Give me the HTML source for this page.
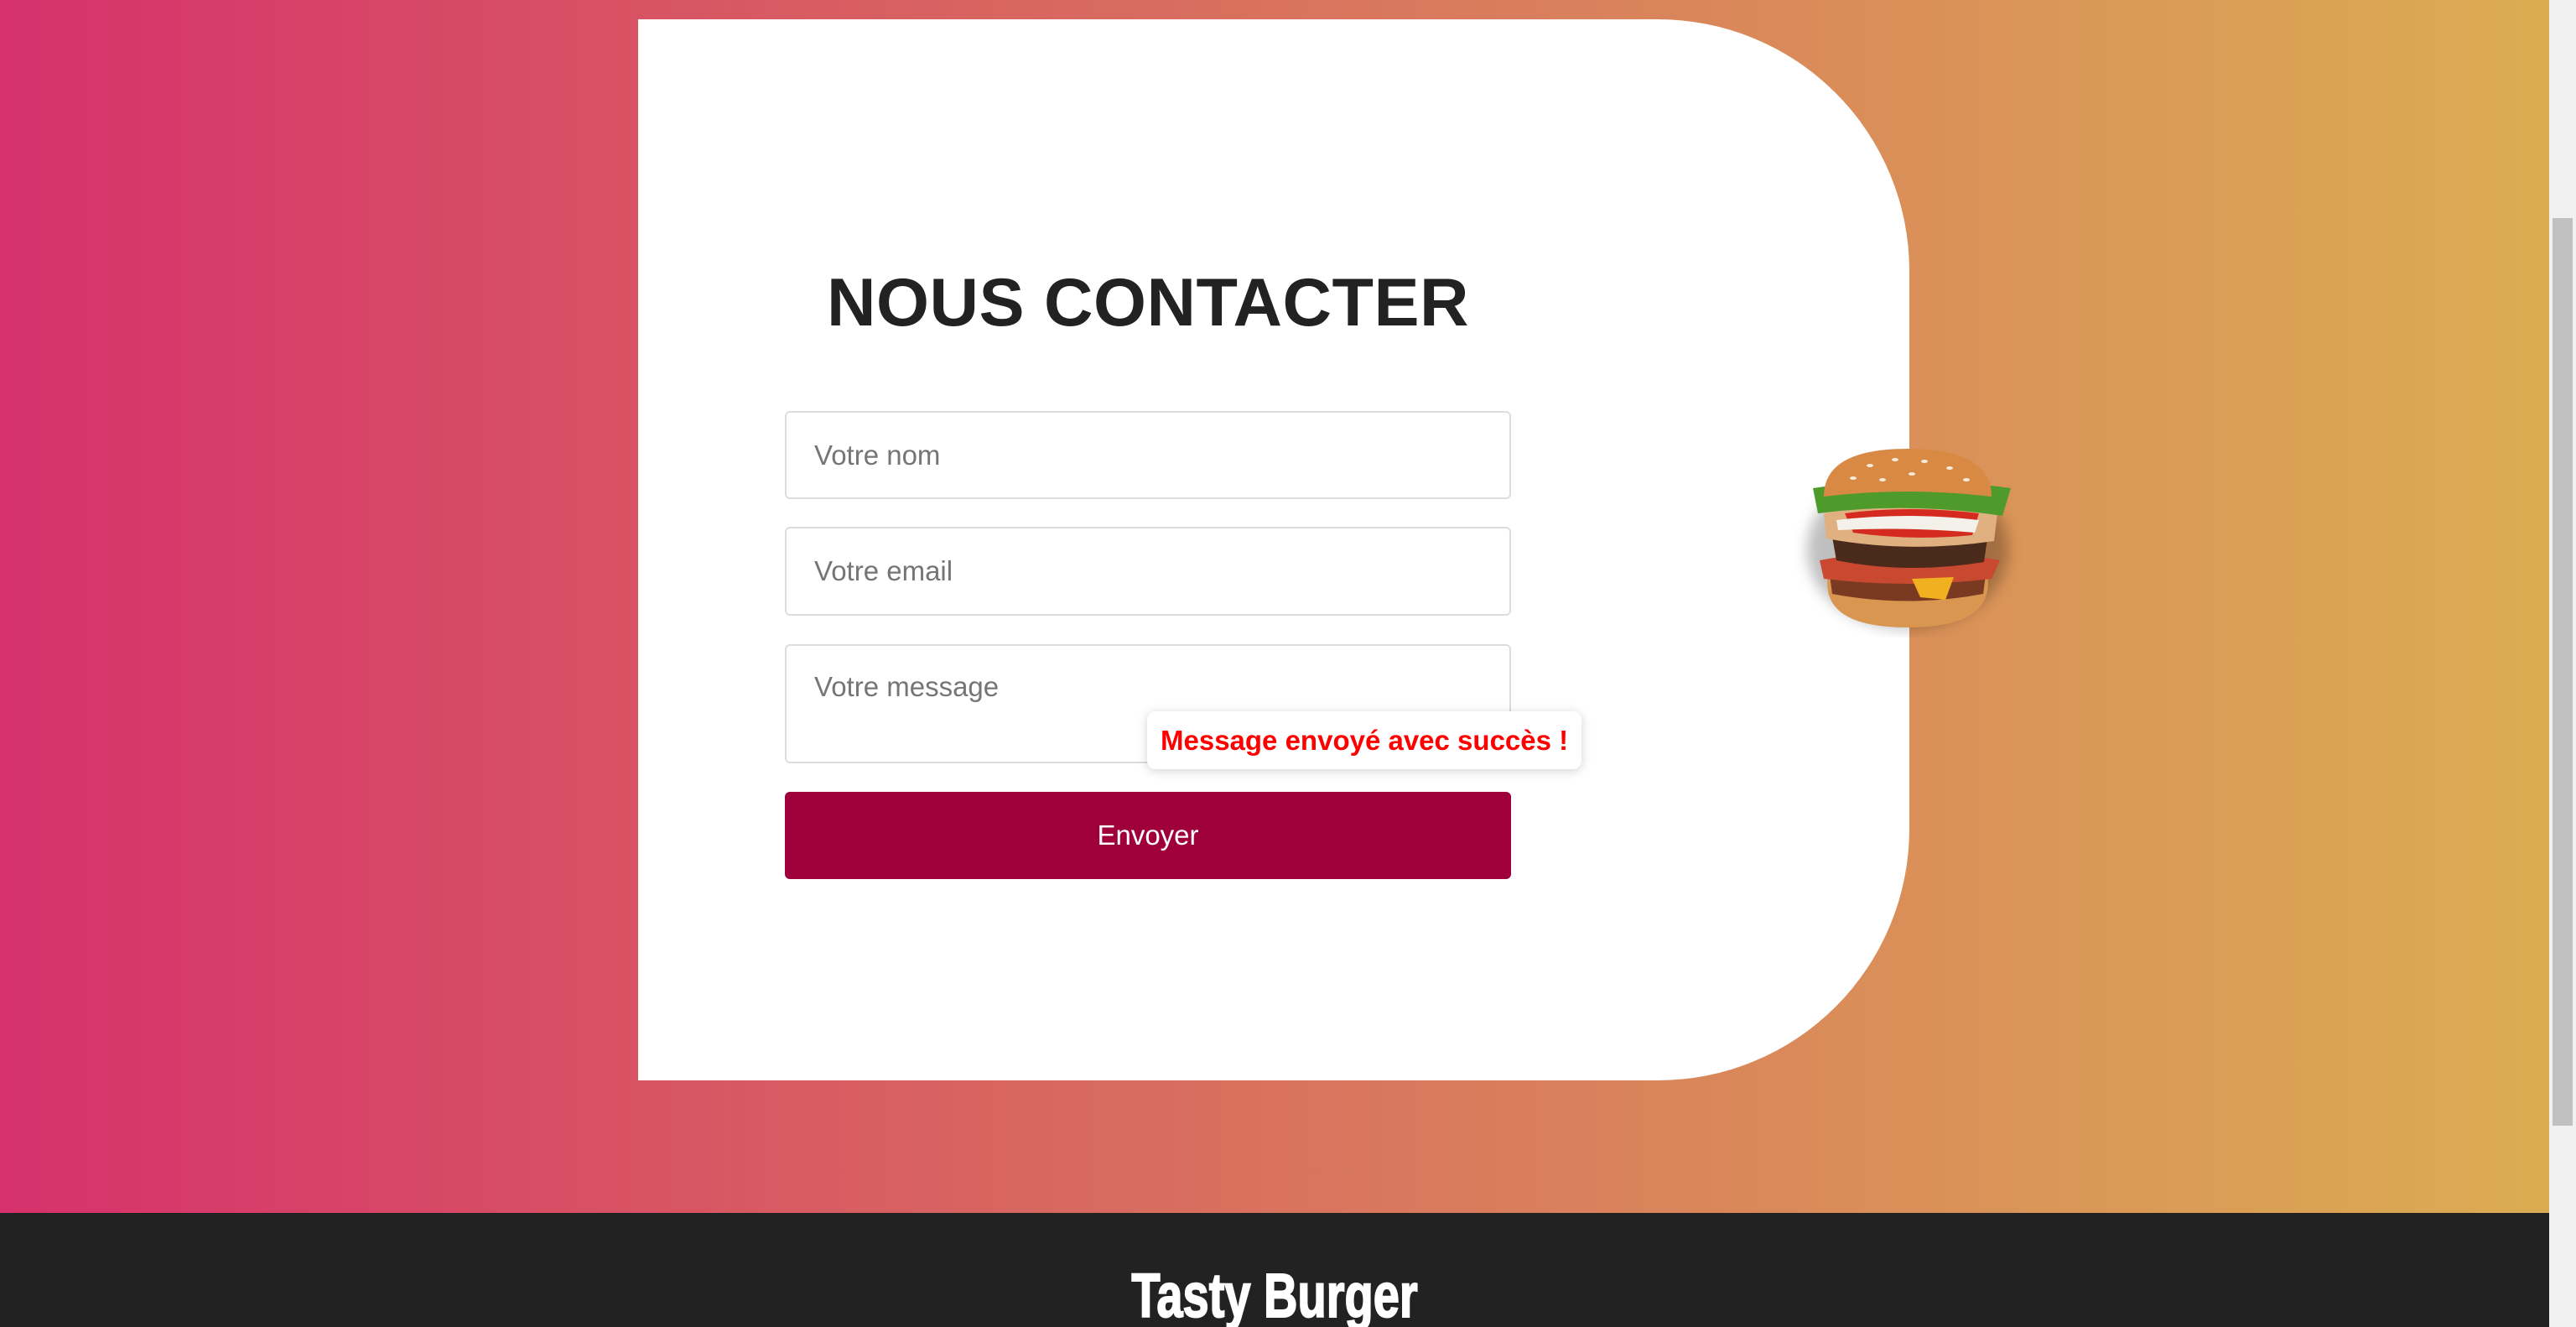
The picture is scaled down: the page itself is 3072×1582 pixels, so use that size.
<!DOCTYPE html>
<html><head><meta charset="utf-8"><style>
*{margin:0;padding:0;box-sizing:border-box}
body{width:3072px;height:1582px;overflow:hidden;font-family:"Liberation Sans",Arial,sans-serif;position:relative;background:linear-gradient(90deg,#d6316c 0%,#d85a62 30%,#d97f5c 60%,#dbae52 100%)}
.card{position:absolute;left:761px;top:23px;width:1516px;height:1265px;background:#fff;border-radius:0 300px 300px 0}
h1{position:absolute;left:0;width:1216px;text-align:center;top:292px;font-size:81px;font-weight:bold;color:#222;letter-spacing:0.5px}
.in{position:absolute;left:936px;width:866px;border:2px solid #ddd;border-radius:6px;background:#fff;font-size:33px;color:#757575;padding-left:33px}
.btn{position:absolute;left:936px;top:944px;width:866px;height:104px;background:#a0003a;border-radius:6px;color:#fff;font-size:33px;text-align:center;line-height:104px}
.toast{position:absolute;left:1368px;top:848px;width:518px;height:69px;background:#fff;border-radius:10px;box-shadow:0 2px 12px rgba(0,0,0,.18);color:#f00;font-weight:bold;font-size:33px;line-height:69px;padding-left:16px;white-space:nowrap}
.foot{position:absolute;left:0;top:1446px;width:3040px;bottom:0;background:#222;overflow:hidden}
.foot div{position:absolute;left:0;width:3040px;text-align:center;top:62px;line-height:1;color:#fff;font-family:Impact,"Liberation Sans Narrow","Liberation Sans",sans-serif;font-weight:bold;font-size:56px;transform:scaleY(1.32);transform-origin:top;-webkit-text-stroke:1.5px #fff}
.sb{position:absolute;left:3040px;top:0;width:32px;height:1582px;background:#f1f1f1}
.th{position:absolute;left:3044px;top:260px;width:24px;height:1082px;background:#c1c1c1}
</style></head><body>
<div class="card"><h1>NOUS CONTACTER</h1></div>
<div class="in" style="top:490px;height:105px;line-height:101px">Votre nom</div>
<div class="in" style="top:628px;height:106px;line-height:102px">Votre email</div>
<div class="in" style="top:768px;height:142px;padding-top:30px">Votre message</div>
<div class="btn">Envoyer</div>
<div class="toast">Message envoyé avec succès !</div>
<svg style="position:absolute;left:2130px;top:520px" width="290" height="240" viewBox="0 0 290 240">
<defs><filter id="s"><feGaussianBlur stdDeviation="8"/></filter></defs>
<ellipse cx="145" cy="135" rx="120" ry="95" fill="rgba(0,0,0,.25)" filter="url(#s)"/>
<path d="M50 165 Q40 228 145 228 Q250 228 240 165 Z" fill="#d99650"/>
<path d="M50 150 Q145 185 240 150 L235 188 Q145 205 55 188Z" fill="#7a3a22"/>
<path d="M40 148 Q145 128 255 148 L245 170 Q145 182 45 170Z" fill="#c84830"/>
<path d="M150 170 L200 168 L190 195 L160 192Z" fill="#f0b020"/>
<path d="M55 120 Q145 100 240 122 L236 150 Q145 165 60 148Z" fill="#4a2a1a"/>
<path d="M45 92 Q145 75 252 92 L248 125 Q145 140 48 122Z" fill="#e0b080"/>
<path d="M70 92 Q145 82 230 92 L222 118 Q150 125 80 115Z" fill="#d42a20"/>
<path d="M60 100 Q145 90 230 100 L225 115 Q145 108 62 112Z" fill="#f4f0ea"/>
<path d="M32 62 Q145 45 268 62 L258 95 Q145 78 38 92Z" fill="#4e9a2a"/>
<path d="M45 72 Q45 15 145 15 Q245 15 245 72 Q145 60 45 72Z" fill="#d88a45"/>
<g fill="#f6ead8"><ellipse cx="100" cy="35" rx="4" ry="2"/><ellipse cx="130" cy="28" rx="4" ry="2"/><ellipse cx="165" cy="30" rx="4" ry="2"/><ellipse cx="195" cy="38" rx="4" ry="2"/><ellipse cx="80" cy="50" rx="4" ry="2"/><ellipse cx="150" cy="45" rx="4" ry="2"/><ellipse cx="215" cy="52" rx="4" ry="2"/><ellipse cx="115" cy="52" rx="4" ry="2"/></g>
</svg>
<div class="foot"><div>Tasty Burger</div></div>
<div class="sb"></div><div class="th"></div>
</body></html>
